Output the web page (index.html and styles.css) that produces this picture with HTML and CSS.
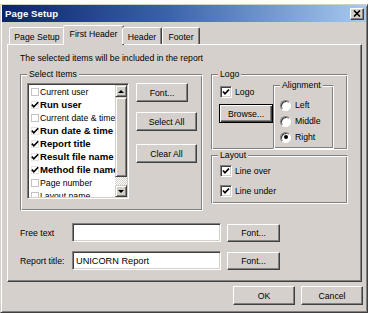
FILE: index.html
```html
<!DOCTYPE html>
<html>
<head>
<meta charset="utf-8">
<title>Page Setup</title>
<link rel="stylesheet" href="styles.css">
</head>
<body>
<div class="strip"><div class="strip-text">Remarks</div></div>
<div class="dialog">
  <div class="titlebar">
    <span class="title">Page Setup</span>
    <span class="close"><svg width="8" height="7" viewBox="0 0 8 7"><path d="M1 0.5L7 6.5M7 0.5L1 6.5" stroke="#000" stroke-width="1.6" fill="none"/></svg></span>
  </div>
  <div class="tabs">
    <div class="tab t1">Page Setup</div>
    <div class="tab t2 active">First Header</div>
    <div class="tab t3">Header</div>
    <div class="tab t4">Footer</div>
  </div>
  <div class="panel">
    <div class="desc">The selected items will be included in the report</div>
    <div class="main">
      <fieldset class="group items">
        <legend>Select Items</legend>
        <div class="items-body">
          <div class="list">
            <div class="rows">
              <div class="row"><span class="cb"></span>Current user</div>
              <div class="row bold"><span class="cb on"><svg width="8" height="8" viewBox="0 0 8 8"><polyline points="0.8,3.6 2.8,5.8 7.2,1.2" stroke="#000" stroke-width="1.6" fill="none"/></svg></span>Run user</div>
              <div class="row"><span class="cb"></span>Current date &amp; time</div>
              <div class="row bold"><span class="cb on"><svg width="8" height="8" viewBox="0 0 8 8"><polyline points="0.8,3.6 2.8,5.8 7.2,1.2" stroke="#000" stroke-width="1.6" fill="none"/></svg></span>Run date &amp; time</div>
              <div class="row bold"><span class="cb on"><svg width="8" height="8" viewBox="0 0 8 8"><polyline points="0.8,3.6 2.8,5.8 7.2,1.2" stroke="#000" stroke-width="1.6" fill="none"/></svg></span>Report title</div>
              <div class="row bold"><span class="cb on"><svg width="8" height="8" viewBox="0 0 8 8"><polyline points="0.8,3.6 2.8,5.8 7.2,1.2" stroke="#000" stroke-width="1.6" fill="none"/></svg></span>Result file name</div>
              <div class="row bold"><span class="cb on"><svg width="8" height="8" viewBox="0 0 8 8"><polyline points="0.8,3.6 2.8,5.8 7.2,1.2" stroke="#000" stroke-width="1.6" fill="none"/></svg></span>Method file name</div>
              <div class="row"><span class="cb"></span>Page number</div>
              <div class="row"><span class="cb"></span>Layout name</div>
            </div>
            <div class="scroll">
              <div class="sbtn"><span class="arrow-up"></span></div>
              <div class="thumb"></div>
              <div class="track"></div>
              <div class="sbtn"><span class="arrow-down"></span></div>
            </div>
          </div>
          <div class="btn-col">
            <div class="btn b-font">Font...</div>
            <div class="btn b-sel">Select All</div>
            <div class="btn b-clear">Clear All</div>
          </div>
        </div>
      </fieldset>
      <div class="right-col">
        <fieldset class="group logo">
          <legend>Logo</legend>
          <div class="logo-body">
            <div class="logo-left">
              <div class="chk-row"><span class="chk"><svg width="10" height="10" viewBox="0 0 10 10"><polyline points="2,4.5 4,6.8 8,2.5" stroke="#000" stroke-width="1.7" fill="none"/></svg></span>Logo</div>
              <div class="btn default b-browse">Browse...</div>
            </div>
            <fieldset class="group align">
              <legend>Alignment</legend>
              <div class="align-body">
                <div class="radio-row"><span class="radio"></span>Left</div>
                <div class="radio-row"><span class="radio"></span>Middle</div>
                <div class="radio-row"><span class="radio on"><span class="dot"></span></span>Right</div>
              </div>
            </fieldset>
          </div>
        </fieldset>
        <fieldset class="group layout">
          <legend>Layout</legend>
          <div class="layout-body">
            <div class="chk-row"><span class="chk"><svg width="10" height="10" viewBox="0 0 10 10"><polyline points="2,4.5 4,6.8 8,2.5" stroke="#000" stroke-width="1.7" fill="none"/></svg></span>Line over</div>
            <div class="chk-row second"><span class="chk"><svg width="10" height="10" viewBox="0 0 10 10"><polyline points="2,4.5 4,6.8 8,2.5" stroke="#000" stroke-width="1.7" fill="none"/></svg></span>Line under</div>
          </div>
        </fieldset>
      </div>
    </div>
    <div class="field-row fr1">
      <span class="label">Free text</span>
      <div class="input"></div>
      <div class="btn b-small">Font...</div>
    </div>
    <div class="field-row fr2">
      <span class="label">Report title:</span>
      <div class="input">UNICORN Report</div>
      <div class="btn b-small">Font...</div>
    </div>
  </div>
  <div class="footer">
    <div class="btn b-ok">OK</div>
    <div class="btn b-cancel">Cancel</div>
  </div>
</div>
</body>
</html>
```

FILE: styles.css
```css
* { box-sizing: border-box; }
html, body { margin: 0; padding: 0; }
body {
  width: 370px;
  height: 313px;
  overflow: hidden;
  background: #fff;
  font-family: "Liberation Sans", Arial, sans-serif;
  font-size: 8.7px;
  color: #000;
}
.strip { height: 4px; overflow: hidden; }
.strip-text { margin-top: -8px; margin-left: 5px; font-size: 9px; line-height: 11px; color: #555; }

.dialog {
  width: 368px;
  height: 309px;
  background: #d5d0cc;
  border: 1px solid;
  border-color: #d4d0c8 #404040 #404040 #d4d0c8;
  box-shadow: inset 1px 1px #fff, inset -1px -1px #808080;
  padding: 0 1px 1px 1px;
  display: flex;
  flex-direction: column;
}

.titlebar {
  height: 17px;
  background: linear-gradient(90deg, #0a246a 0%, #3a62a8 45%, #a6caf0 100%);
  display: flex;
  align-items: center;
  justify-content: space-between;
  padding: 0 2px 0 3px;
}
.title { color: #fff; font-weight: bold; font-size: 9.6px; letter-spacing: 0.1px; }
.close {
  width: 14px;
  height: 12px;
  background: #d4d0c8;
  border: 1px solid;
  border-color: #fff #404040 #404040 #fff;
  box-shadow: inset -1px -1px #808080;
  display: flex;
  align-items: center;
  justify-content: center;
}

.tabs {
  display: flex;
  align-items: flex-end;
  height: 19px;
  margin-top: 3px;
  padding-left: 7px;
  position: relative;
  z-index: 1;
}
.tab {
  height: 17px;
  background: #d5d0cc;
  border: 1px solid;
  border-bottom: none;
  border-color: #fff #404040 transparent #fff;
  box-shadow: inset -1px 0 #808080;
  border-radius: 2px 2px 0 0;
  display: flex;
  align-items: center;
  justify-content: center;
  padding-top: 1px;
  white-space: nowrap;
}
.t1 { width: 56px; }
.t2 { width: 57px; }
.t3 { width: 40px; }
.t4 { width: 38px; }
.tab.active {
  width: 61px;
  height: 20px;
  margin: 0 -2px -1px;
  padding-top: 0;
  padding-bottom: 3px;
}

.panel {
  margin-left: 5px;
  width: 355px;
  height: 238px;
  border: 1px solid;
  border-color: #fff #404040 #404040 #fff;
  box-shadow: inset -1px -1px #808080;
  padding: 8px 0 0 12px;
  display: flex;
  flex-direction: column;
}
.desc { line-height: 11px; white-space: nowrap; }

.main { display: flex; margin-top: 5px; }

fieldset.group {
  margin: 0;
  padding: 0;
  min-inline-size: 0;
  border: 1px solid;
  border-color: #808080 #fff #fff #808080;
  box-shadow: inset 1px 1px #fff, inset -1px -1px #808080;
}
fieldset.group legend {
  padding: 0 2px;
  margin-left: 6px;
  line-height: 11px;
  background: #d5d0cc;
}

.items { width: 183px; height: 142px; }
.items-body { display: flex; padding: 3px 0 0 6px; }

.list {
  width: 102px;
  height: 116px;
  background: #fff;
  border: 1px solid;
  border-color: #808080 #fff #fff #808080;
  box-shadow: inset 1px 1px #404040, inset -1px -1px #d4d0c8;
  padding: 1px;
  display: flex;
}
.rows { flex: 1; overflow: hidden; padding-left: 2px; }
.row { height: 13px; display: flex; align-items: center; white-space: nowrap; }
.row.bold { font-weight: bold; font-size: 9.6px; }
.cb {
  width: 8px;
  height: 8px;
  flex: none;
  border: 1px solid #c4c4c4;
  margin-right: 1px;
  display: flex;
  align-items: center;
  justify-content: center;
}
.cb.on { border-color: #e4e4e4; }
.cb svg { flex: none; }

.scroll { width: 12px; display: flex; flex-direction: column; }
.sbtn, .thumb {
  background: #d4d0c8;
  border: 1px solid;
  border-color: #d4d0c8 #404040 #404040 #d4d0c8;
  box-shadow: inset 1px 1px #fff, inset -1px -1px #808080;
}
.sbtn { height: 12px; display: flex; align-items: center; justify-content: center; }
.thumb { height: 80px; }
.track {
  flex: 1;
  background: repeating-conic-gradient(#fff 0 25%, #d4d0c8 0 50%) 0 0 / 2px 2px;
}
.arrow-up {
  width: 0; height: 0;
  border-left: 3px solid transparent;
  border-right: 3px solid transparent;
  border-bottom: 3px solid #000;
}
.arrow-down {
  width: 0; height: 0;
  border-left: 3px solid transparent;
  border-right: 3px solid transparent;
  border-top: 3px solid #000;
}

.btn {
  height: 19px;
  display: flex;
  align-items: center;
  justify-content: center;
  background: #d5d0cc;
  border: 1px solid;
  border-color: #fff #404040 #404040 #fff;
  box-shadow: inset -1px -1px #808080;
  white-space: nowrap;
}
.btn.default {
  border: 1px solid #000;
  box-shadow: inset 1px 1px #fff, inset -1px -1px #404040, inset -2px -2px #808080;
}
.btn-col { display: flex; flex-direction: column; align-items: flex-start; margin-left: 7px; }
.b-font { width: 52px; }
.b-sel { width: 61px; margin-top: 10px; }
.b-clear { width: 61px; margin-top: 13px; }

.right-col { display: flex; flex-direction: column; margin-left: 8px; }
.logo { width: 137px; height: 81px; }
.logo-body { display: flex; }
.logo-left { padding: 6px 0 0 7px; display: flex; flex-direction: column; align-items: flex-start; }
.chk-row { display: flex; align-items: center; height: 12px; margin-left: 1px; white-space: nowrap; }
.chk {
  width: 12px;
  height: 12px;
  flex: none;
  background: #fff;
  border: 1px solid;
  border-color: #808080 #fff #fff #808080;
  box-shadow: inset 1px 1px #404040, inset -1px -1px #d4d0c8;
  margin-right: 3px;
  display: flex;
  align-items: center;
  justify-content: center;
}
.b-browse { width: 54px; margin-top: 6px; }

.align { width: 61px; height: 69px; margin: -2px 4px 0 auto; }
.align legend { margin-left: 4px; }
.align-body { padding: 6px 0 0 6px; }
.radio-row { height: 16px; display: flex; align-items: center; }
.radio {
  width: 11px;
  height: 11px;
  flex: none;
  border-radius: 50%;
  background: #fff;
  border: 1px solid;
  border-color: #808080 #fff #fff #808080;
  box-shadow: inset 1px 1px #404040;
  margin-right: 4px;
  display: flex;
  align-items: center;
  justify-content: center;
}
.dot { width: 4px; height: 4px; border-radius: 50%; background: #000; }

.layout { width: 137px; height: 54px; margin-top: 5px; }
.layout-body { padding: 4px 0 0 7px; }
.chk-row.second { margin-top: 8px; }

.field-row { display: flex; align-items: center; height: 19px; }
.fr1 { margin-top: 12px; }
.fr2 { margin-top: 9px; }
.label { width: 52px; white-space: nowrap; }
.input {
  width: 149px;
  height: 19px;
  background: #fff;
  border: 1px solid;
  border-color: #808080 #fff #fff #808080;
  box-shadow: inset 1px 1px #404040, inset -1px -1px #d4d0c8;
  padding-left: 3px;
  display: flex;
  align-items: center;
  font-size: 9.2px;
}
.b-small { width: 53px; height: 18px; margin-left: 6px; }

.footer { display: flex; justify-content: flex-end; margin-top: 4px; padding-right: 3px; }
.b-ok { width: 62px; }
.b-cancel { width: 62px; margin-left: 6px; }
```
